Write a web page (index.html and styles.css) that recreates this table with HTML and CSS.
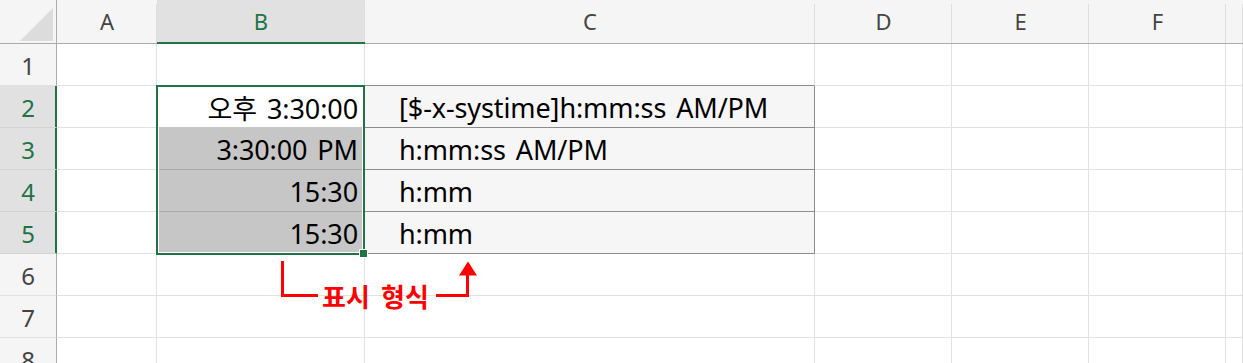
FILE: index.html
```html
<!DOCTYPE html>
<html lang="ko">
<head>
<meta charset="utf-8">
<title>Sheet</title>
<link rel="stylesheet" href="styles.css">
</head>
<body>
<div class="sheet">
  <div class="corner"><span class="tri"></span></div>
  <div class="ch">A</div>
  <div class="ch sel">B</div>
  <div class="ch">C</div>
  <div class="ch">D</div>
  <div class="ch">E</div>
  <div class="ch">F</div>
  <div class="ch"></div>

  <div class="rh">1</div>
  <div class="c"></div><div class="c"></div><div class="c fmt-top"></div><div class="c"></div><div class="c"></div><div class="c"></div><div class="c"></div>

  <div class="rh sel">2</div>
  <div class="c"></div><div class="c num active">오후 3:30:00</div><div class="c fmt">[$-x-systime]h:mm:ss AM/PM</div><div class="c"></div><div class="c"></div><div class="c"></div><div class="c"></div>

  <div class="rh sel">3</div>
  <div class="c"></div><div class="c num grey">3:30:00 PM</div><div class="c fmt">h:mm:ss AM/PM</div><div class="c"></div><div class="c"></div><div class="c"></div><div class="c"></div>

  <div class="rh sel">4</div>
  <div class="c"></div><div class="c num grey">15:30</div><div class="c fmt">h:mm</div><div class="c"></div><div class="c"></div><div class="c"></div><div class="c"></div>

  <div class="rh sel">5</div>
  <div class="c"></div><div class="c num grey">15:30</div><div class="c fmt">h:mm</div><div class="c"></div><div class="c"></div><div class="c"></div><div class="c"></div>

  <div class="rh">6</div>
  <div class="c"></div><div class="c"></div><div class="c"></div><div class="c"></div><div class="c"></div><div class="c"></div><div class="c"></div>

  <div class="rh">7</div>
  <div class="c"></div><div class="c"></div><div class="c"></div><div class="c"></div><div class="c"></div><div class="c"></div><div class="c"></div>

  <div class="rh">8</div>
  <div class="c"></div><div class="c"></div><div class="c"></div><div class="c"></div><div class="c"></div><div class="c"></div><div class="c"></div>
</div>

<div class="selection"></div>
<div class="handle"></div>

<div class="note">
  <svg class="note-lines" width="1243" height="363" viewBox="0 0 1243 363">
    <path d="M282.5 261 V295.5 H318" fill="none" stroke="#ff0000" stroke-width="3"/>
    <path d="M436 295.5 H467.5 V273" fill="none" stroke="#ff0000" stroke-width="3"/>
    <polygon points="459,275.5 468,261.5 477,275.5" fill="#ff0000"/>
  </svg>
  <span class="note-label">표시 형식</span>
</div>
</body>
</html>
```

FILE: styles.css
```css
html, body {
  margin: 0;
  padding: 0;
  background: #ffffff;
  overflow: hidden;
}

body {
  width: 1243px;
  height: 363px;
  position: relative;
  font-family: "Noto Sans", "Noto Sans CJK KR", sans-serif;
}

.sheet {
  display: grid;
  grid-template-columns: 57px 100px 208px 450px 137px 137px 137px 1fr;
  grid-template-rows: 44px repeat(8, 42px);
  width: 1243px;
}

.corner {
  background: #f5f5f5;
  border-right: 1px solid #ababab;
  border-bottom: 1px solid #ababab;
  box-sizing: border-box;
  position: relative;
}

.tri {
  position: absolute;
  left: 20px;
  top: 8px;
  width: 33px;
  height: 33px;
  background: #dcdcdc;
  clip-path: polygon(100% 0, 100% 100%, 0 100%);
}

.ch {
  box-sizing: border-box;
  background: #f5f5f5 linear-gradient(#dedede, #dedede) right 4px / 1px calc(100% - 4px) no-repeat;
  border-bottom: 1px solid #ababab;
  display: flex;
  align-items: center;
  justify-content: center;
  font-size: 22px;
  color: #444444;
  padding-bottom: 1px;
}

.ch.sel {
  background-color: #e1e1e1;
  border-bottom: 1px solid #217346;
  box-shadow: inset 0 -1px 0 #217346;
  color: #217346;
}

.rh {
  box-sizing: border-box;
  background: #f5f5f5;
  border-right: 1px solid #ababab;
  border-bottom: 1px solid #e1e1e1;
  display: flex;
  align-items: center;
  justify-content: center;
  font-size: 24px;
  color: #444444;
  padding-top: 1px;
}

.rh.sel {
  background: #e1e1e1;
  border-right: 1px solid #217346;
  box-shadow: inset -1px 0 0 #217346;
  border-bottom-color: #d2d2d2;
  color: #217346;
}

.c {
  box-sizing: border-box;
  border-right: 1px solid #e1e1e1;
  border-bottom: 1px solid #e1e1e1;
  display: flex;
  align-items: center;
  font-size: 27px;
  color: #000000;
  white-space: nowrap;
  word-spacing: 3px;
  letter-spacing: -0.1px;
  padding-top: 2px;
}

.num {
  justify-content: flex-end;
  padding-right: 6px;
}

.grey {
  background: #c6c6c6;
  border-bottom-color: #a9a9a9;
}

.active {
  background: #ffffff;
  border-bottom-color: #c8c8c8;
}

.fmt-top {
  border-bottom-color: #8c8c8c;
}

.fmt {
  background: #f6f6f6;
  border-right-color: #8c8c8c;
  border-bottom-color: #8c8c8c;
  padding-left: 34px;
}

.selection {
  position: absolute;
  left: 156px;
  top: 85px;
  width: 209px;
  height: 170px;
  box-sizing: border-box;
  border: 2px solid #217346;
  box-shadow: inset 0 0 0 1px #ffffff;
  pointer-events: none;
}

.handle {
  position: absolute;
  left: 360px;
  top: 250px;
  width: 7px;
  height: 7px;
  box-sizing: border-box;
  background: #217346;
  outline: 1px solid #ffffff;
}

.note {
  position: absolute;
  left: 0;
  top: 0;
  width: 1243px;
  height: 363px;
  pointer-events: none;
}

.note-lines {
  position: absolute;
  left: 0;
  top: 0;
}

.note-label {
  position: absolute;
  left: 322px;
  top: 280px;
  font-family: "Noto Sans CJK KR", sans-serif;
  font-weight: 700;
  font-size: 26px;
  line-height: 32px;
  word-spacing: 4px;
  color: #ff0000;
  white-space: nowrap;
}
```
